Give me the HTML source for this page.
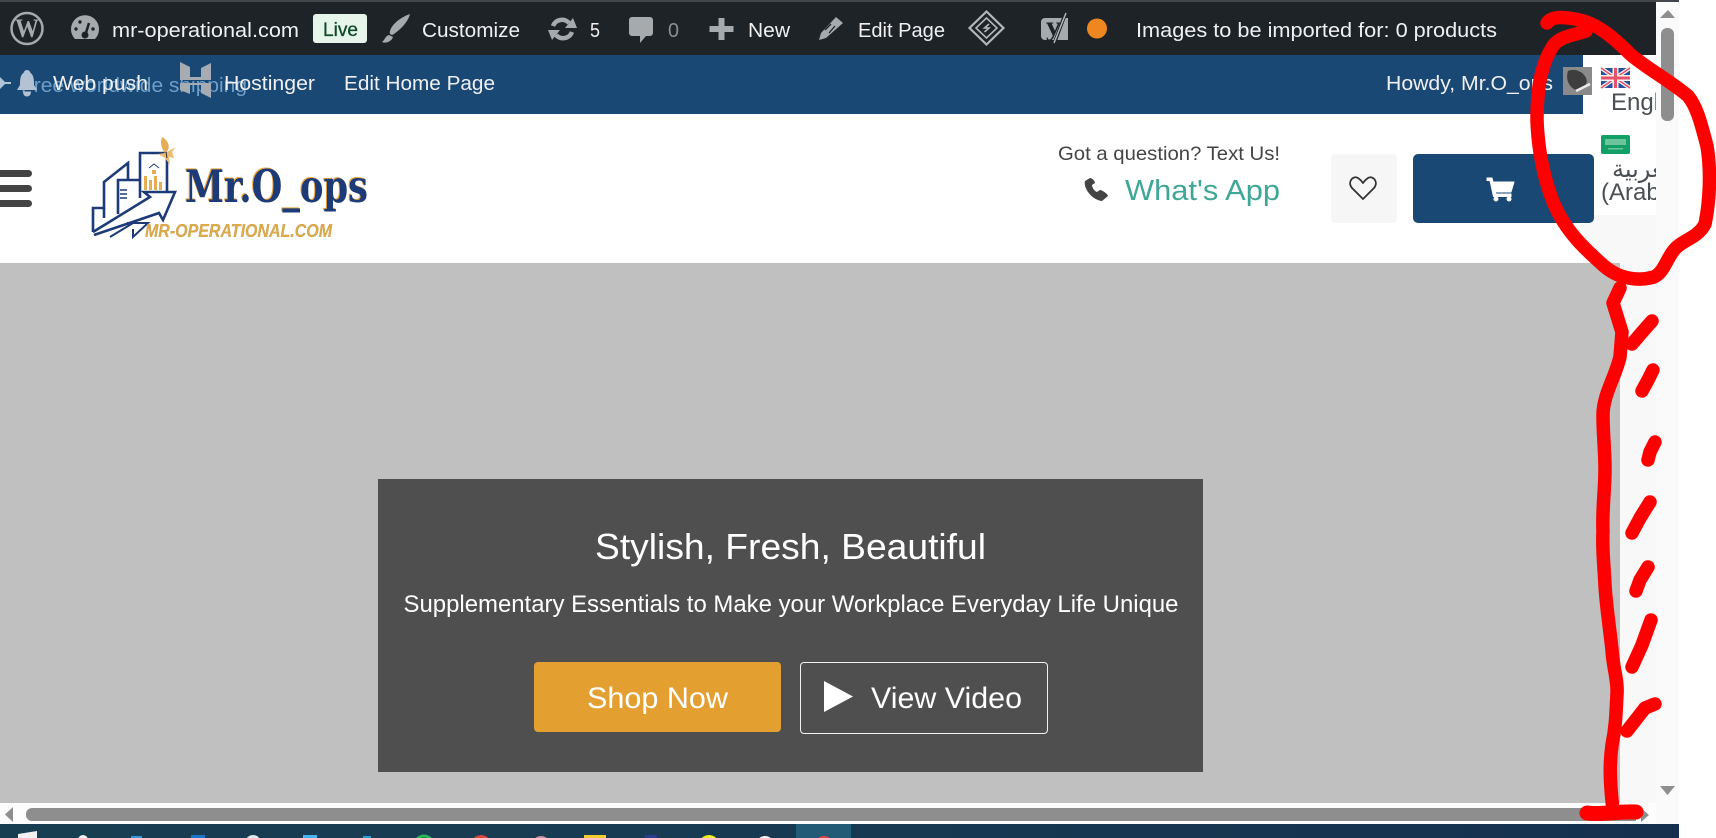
<!DOCTYPE html>
<html lang="en">
<head>
<meta charset="utf-8">
<title>Mr.O_ops</title>
<style>
html,body{margin:0;padding:0;width:1716px;height:838px;overflow:hidden;background:#fff}
body{position:relative;font-family:"Liberation Sans",sans-serif}
.b{position:absolute}
svg{position:absolute;left:0;top:0}
text{font-family:"Liberation Sans","DejaVu Sans",sans-serif}
</style>
</head>
<body>
<div class="b" style="left:0;top:0;width:1679px;height:2px;background:#43474c"></div>
<div class="b" style="left:0;top:2px;width:1656px;height:53px;background:#1d2327"></div>
<div class="b" style="left:0;top:55px;width:1583px;height:59px;background:#1a4875"></div>
<div class="b" style="left:1583px;top:215px;width:73px;height:588px;background:#f8f8f9"></div>
<div class="b" style="left:1620px;top:263px;width:36px;height:540px;background:#f8f8f9"></div>
<div class="b" style="left:0;top:263px;width:1620px;height:540px;background:#c0c0c0"></div>
<div class="b" style="left:1656px;top:2px;width:23px;height:822px;background:#fafafa"></div>
<div class="b" style="left:1331px;top:154px;width:66px;height:69px;background:#f6f6f6;border-radius:4px"></div>
<div class="b" style="left:1413px;top:154px;width:181px;height:69px;background:#1a4875;border-radius:5px"></div>
<div class="b" style="left:378px;top:479px;width:825px;height:293px;background:#4f4f4f"></div>
<div class="b" style="left:534px;top:662px;width:247px;height:70px;background:#e39f30;border-radius:4px"></div>
<div class="b" style="left:800px;top:662px;width:246px;height:70px;border:1px solid #f2f2f2;border-radius:4px"></div>
<div class="b" style="left:0;top:803px;width:1656px;height:21px;background:#fdfdfd"></div>
<div class="b" style="left:26px;top:808px;width:1610px;height:13px;background:#8e8e8e;border-radius:6px 0 0 6px"></div>
<div class="b" style="left:1661px;top:28px;width:13px;height:93px;background:#8e8e8e;border-radius:6px"></div>
<div class="b" style="left:0;top:824px;width:1679px;height:14px;background:linear-gradient(90deg,#183e52,#173a52 50%,#15304f)"></div>
<div class="b" style="left:796px;top:824px;width:55px;height:14px;background:#235a75"></div>

<svg width="1716" height="838" viewBox="0 0 1716 838" xmlns="http://www.w3.org/2000/svg">
<!-- taskbar icons -->
<g>
<path d="M18 838V834L37 831V838Z" fill="#f2f2f2"/>
<circle cx="83" cy="840" r="5" fill="#f2f2f2"/>
<rect x="131" y="836" width="11" height="3" fill="#2f9ae0"/>
<rect x="191" y="835" width="14" height="4" fill="#1976c9"/>
<circle cx="253" cy="843" r="8" fill="#dfe7ea"/>
<rect x="303" y="835" width="14" height="4" fill="#45b4ef"/>
<rect x="363" y="836" width="8" height="3" fill="#2d9fd8"/>
<circle cx="424" cy="845" r="9" fill="none" stroke="#25b45a" stroke-width="3"/>
<circle cx="481" cy="845" r="10" fill="#d8453c"/>
<circle cx="541" cy="845" r="9" fill="#c98fa0"/>
<rect x="584" y="835" width="22" height="4" fill="#f2cc2e"/>
<rect x="645" y="835" width="12" height="4" fill="#2c3a8c"/>
<circle cx="709" cy="845" r="10" fill="#f4f01e"/>
<circle cx="765" cy="845" r="9" fill="#f4f4f4"/>
<circle cx="824" cy="845" r="9" fill="#d8453c"/>
</g>

<!-- admin bar -->
<circle cx="27" cy="28.5" r="15.5" fill="none" stroke="#a7aaad" stroke-width="2.5"/>
<text x="27" y="37" font-size="26" font-weight="700" text-anchor="middle" fill="#a7aaad" style="font-family:'Liberation Serif',serif" textLength="24" lengthAdjust="spacingAndGlyphs">W</text>
<path d="M75 39A14 14 0 1 1 95 39Z" fill="#a7aaad"/>
<path d="M85 36L89 23" stroke="#1d2327" stroke-width="2.5"/>
<circle cx="85" cy="35" r="3.5" fill="#1d2327"/>
<circle cx="76" cy="29" r="1.7" fill="#1d2327"/><circle cx="80" cy="22" r="1.7" fill="#1d2327"/><circle cx="93" cy="29" r="1.7" fill="#1d2327"/>
<g fill="#f0f0f1" font-size="20">
<text x="112" y="37" textLength="187" lengthAdjust="spacingAndGlyphs">mr-operational.com</text>
<text x="422" y="37" textLength="98" lengthAdjust="spacingAndGlyphs">Customize</text>
<text x="590" y="37" textLength="10" lengthAdjust="spacingAndGlyphs">5</text>
<text x="748" y="37" textLength="42" lengthAdjust="spacingAndGlyphs">New</text>
<text x="858" y="37" textLength="87" lengthAdjust="spacingAndGlyphs">Edit Page</text>
<text x="1136" y="37" textLength="361" lengthAdjust="spacingAndGlyphs">Images to be imported for: 0 products</text>
</g>
<rect x="313" y="14" width="54" height="29" rx="3" fill="#e7f4ea"/>
<text x="323" y="36" font-size="19" fill="#0f4a28" stroke="#0f4a28" stroke-width=".3" textLength="35" lengthAdjust="spacingAndGlyphs">Live</text>
<path d="M410 14C401 17 392 24 390 31C389 34 391 36 394 34C401 29 408 22 410 14Z M389 35C385 36 385 40 382 42C386 44 392 41 393 37Z" fill="#a7aaad"/>
<path d="M553 26A9.5 9.5 0 0 1 569 23" fill="none" stroke="#a7aaad" stroke-width="4.5"/>
<path d="M565 28H577L573 18Z" fill="#a7aaad"/>
<path d="M572 32A9.5 9.5 0 0 1 556 35" fill="none" stroke="#a7aaad" stroke-width="4.5"/>
<path d="M560 30H548L552 40Z" fill="#a7aaad"/>
<path d="M632 17H650A3 3 0 0 1 653 20V33A3 3 0 0 1 650 36H646L640 43V36H632A3 3 0 0 1 629 33V20A3 3 0 0 1 632 17Z" fill="#a7aaad"/>
<text x="668" y="37" font-size="20" fill="#8c8f94" textLength="11" lengthAdjust="spacingAndGlyphs">0</text>
<path d="M718.5 18h6v8h9v6h-9v8h-6v-8h-9v-6h9z" fill="#a7aaad"/>
<path d="M836 17L843 23L826 38L819 40L821 33Z" fill="#a7aaad"/>
<path d="M831 24L825 30M835 26L829 33" stroke="#1d2327" stroke-width="1.3"/>
<path d="M986.5 11.5L1003.5 28L986.5 44.5L969.5 28Z" fill="none" stroke="#b4b6b9" stroke-width="2.2"/>
<path d="M986.5 18L997 28L986.5 38L976 28Z" fill="none" stroke="#b4b6b9" stroke-width="1.6"/>
<path d="M989 24L984.5 28H989L984.5 32" fill="none" stroke="#b4b6b9" stroke-width="1.6"/>
<path d="M1045 18H1068V40H1058H1045A4 4 0 0 1 1041 36V22A4 4 0 0 1 1045 18Z" fill="#a7aaad"/>
<text x="1046" y="35" font-size="27" font-weight="700" fill="#1d2327" style="font-family:'Liberation Serif',serif" textLength="15" lengthAdjust="spacingAndGlyphs">y</text>
<path d="M1066 12L1054 44H1048" fill="none" stroke="#1d2327" stroke-width="3.5"/>
<path d="M1066 13L1054 43" fill="none" stroke="#b4b6b9" stroke-width="1.5"/>
<circle cx="1097" cy="28.5" r="10" fill="#ef861f"/>

<!-- second row -->
<path d="M0 77L5 82H11V84H5L0 89Z" fill="#b0c4d8"/>
<text x="21" y="92" font-size="20" fill="#6c9fc9" textLength="226" lengthAdjust="spacingAndGlyphs">Free worldwide shipping</text>
<path d="M27 70A3.5 3.5 0 0 1 30.5 73C34 75 34 81 34 85L37 90H17L20 85C20 81 20 75 23.5 73A3.5 3.5 0 0 1 27 70ZM23 91.5H31C31 95 29 96.5 27 96.5C25 96.5 23 95 23 91.5Z" fill="#b4c3d3"/>
<path d="M180 62L190 67V77H201V68L211 63V80H180ZM180 83H211V98L201 93V85H190V94L180 90Z" fill="#a7acb2"/>
<g fill="#f0f0f1" font-size="20">
<text x="53" y="90" textLength="95" lengthAdjust="spacingAndGlyphs">Web push</text>
<text x="224" y="90" textLength="91" lengthAdjust="spacingAndGlyphs">Hostinger</text>
<text x="344" y="90" textLength="151" lengthAdjust="spacingAndGlyphs">Edit Home Page</text>
<text x="1386" y="90" textLength="167" lengthAdjust="spacingAndGlyphs">Howdy, Mr.O_ops</text>
</g>
<rect x="1563" y="67" width="29" height="28" fill="#8a8a8a"/>
<path d="M1568 71C1574 68 1583 71 1586 78C1589 85 1582 90 1576 90C1570 88 1565 80 1568 71Z" fill="#3e3e3e"/>
<path d="M1576 91L1590 84" stroke="#ececec" stroke-width="2.5"/>

<!-- language panel -->
<rect x="1601" y="68" width="29" height="20" fill="#2a4f9a"/>
<path d="M1601 68L1630 88M1630 68L1601 88" stroke="#f2f2f2" stroke-width="4"/>
<path d="M1601 68L1630 88M1630 68L1601 88" stroke="#e6526a" stroke-width="1.5"/>
<path d="M1615.5 68V88M1601 78H1630" stroke="#f2f2f2" stroke-width="6"/>
<path d="M1615.5 68V88M1601 78H1630" stroke="#e6526a" stroke-width="3"/>
<rect x="1601" y="135" width="29" height="19" rx="2" fill="#12a066"/>
<rect x="1605" y="139" width="21" height="6" fill="#6cc49f"/>
<rect x="1608" y="148" width="15" height="1.5" fill="#6cc49f"/>
<svg x="1583" y="55" width="73" height="160" viewBox="1583 55 73 160">
<text x="1611" y="110" font-size="24" fill="#4a4f55">English</text>
<text x="1612" y="177" font-size="24" fill="#4a4f55" style="font-family:'DejaVu Sans',sans-serif" direction="rtl" text-anchor="end">العربية</text>
<text x="1601" y="200" font-size="24" fill="#4a4f55">(Arabic)</text>
</svg>

<!-- header right -->
<text x="1058" y="160" font-size="19.5" fill="#444" textLength="222" lengthAdjust="spacingAndGlyphs">Got a question? Text Us!</text>
<path d="M1090 178L1085 181C1083 188 1092 200 1102 201L1108 196C1108 194 1102 190 1100 190L1097 192C1094 191 1092 187 1092 185L1095 183C1095 181 1092 178 1090 178Z" fill="#444"/>
<text x="1125" y="200" font-size="29" fill="#3fa796" textLength="155" lengthAdjust="spacingAndGlyphs">What's App</text>
<path d="M1363 199L1352 188C1347 182 1353 175 1358 178C1361 180 1363 183 1363 183C1363 183 1365 180 1368 178C1373 175 1379 182 1374 188Z" fill="none" stroke="#333" stroke-width="1.8" stroke-linejoin="round"/>
<path d="M1487 178H1492L1493 182H1514L1511 192H1495L1496 194H1511V196.5H1493.5L1490 180.5H1487Z" fill="#fff" stroke="#fff" stroke-linejoin="round"/>
<circle cx="1496" cy="199" r="2.5" fill="#fff"/><circle cx="1509" cy="199" r="2.5" fill="#fff"/>

<!-- hamburger -->
<g fill="#444"><rect x="-6" y="170" width="38" height="7" rx="3.5"/><rect x="-6" y="185" width="38" height="7" rx="3.5"/><rect x="-6" y="200" width="38" height="7" rx="3.5"/></g>

<!-- logo -->
<g fill="none" stroke="#1d3b78" stroke-width="2.6">
<path d="M93 232V208H104V182L128 163V180"/>
<path d="M104 208V218"/>
<path d="M118 214V180H140"/>
<path d="M140 198V153H167V192"/>
<path d="M93 232L150 197L144 192H175L163 220L159 213L94 235"/>
<path d="M110 237L133 223H127H148L133 237V229" stroke-width="2"/>
<path d="M120 190H127M120 194H127M120 198H127" stroke-width="1.6"/>
<path d="M149 168L154 164L159 168" stroke-width="1"/>
</g>
<g fill="#e5ae55">
<rect x="144" y="176" width="3" height="14"/><rect x="149" y="180" width="3" height="10"/><rect x="154" y="176" width="3" height="14"/><rect x="159" y="182" width="3" height="8"/>
<rect x="152" y="170" width="4" height="4"/>
<path d="M162 137C168 140 170 146 168 150L165 153C161 148 160 142 162 137Z"/>
<path d="M165 153L176 147L172 152L174 158L169 157L170 165L165 158L158 154Z" fill="#ecbc74"/>
</g>
<path d="M166 152L167 158" stroke="#333" stroke-width="1"/>
<text x="185" y="202" font-size="45" font-weight="700" fill="#1d3b78" style="font-family:'DejaVu Serif','Liberation Serif',serif;filter:drop-shadow(-1px -1px 0 #e8a33a)" textLength="183" lengthAdjust="spacingAndGlyphs">Mr.O_ops</text>
<text x="145" y="237" font-size="18.5" font-weight="700" font-style="italic" fill="#dcaa4a" style="filter:drop-shadow(.8px .8px 0 #8a7a5a)" textLength="187" lengthAdjust="spacingAndGlyphs">MR-OPERATIONAL.COM</text>

<!-- hero -->
<g fill="#fff">
<text x="595" y="559" font-size="36" textLength="391" lengthAdjust="spacingAndGlyphs">Stylish, Fresh, Beautiful</text>
<text x="403.5" y="612" font-size="24" textLength="775" lengthAdjust="spacingAndGlyphs">Supplementary Essentials to Make your Workplace Everyday Life Unique</text>
<text x="587" y="708" font-size="30" textLength="141" lengthAdjust="spacingAndGlyphs">Shop Now</text>
<text x="871" y="708" font-size="30" textLength="151" lengthAdjust="spacingAndGlyphs">View Video</text>
<path d="M824 681L853 696.5L824 712Z"/>
</g>

<!-- scrollbar arrows -->
<g fill="#8e8e8e">
<path d="M1668 10L1675 18H1660Z"/>
<path d="M1660 786H1675L1667.5 795Z"/>
<path d="M13 807V822L5 814.5Z"/>
<path d="M1641 808V822L1649 815Z"/>
</g>

<!-- red annotation -->
<g fill="none" stroke="#fe0000" stroke-width="13.5" stroke-linecap="round" stroke-linejoin="round">
<path d="M1547 23C1552 16 1562 17 1575 19C1595 22 1612 36 1630 54C1646 68 1672 82 1688 96C1698 108 1702 128 1707 146C1711 170 1710 200 1705 224C1698 238 1682 240 1674 250C1666 260 1664 272 1654 277C1640 281 1620 280 1604 266C1586 250 1566 232 1554 204C1544 180 1538 150 1537 120C1537 92 1540 66 1553 46C1560 36 1572 36 1586 31"/>
<path d="M1620 288L1613 303L1622 332L1620 357C1615 378 1603 395 1603 415C1603 435 1605 450 1605 469C1605 490 1602 510 1603 531C1602 548 1604 565 1605 585C1606 605 1610 630 1612 650C1613 668 1618 680 1617 694C1616 712 1616 725 1612 745C1610 760 1609 775 1613 810"/>
<path d="M1587 813C1600 815 1620 811 1636 812" stroke-width="15"/>
<path d="M1652 321L1644 330L1632 344"/>
<path d="M1653 370L1648 380L1642 391"/>
<path d="M1655 442L1650 452L1648 460"/>
<path d="M1650 502L1640 518L1632 533"/>
<path d="M1648 567L1640 580L1636 591"/>
<path d="M1651 620L1642 645L1632 667"/>
<path d="M1655 704L1645 708L1627 731"/>
</g>
</svg>
</body>
</html>
